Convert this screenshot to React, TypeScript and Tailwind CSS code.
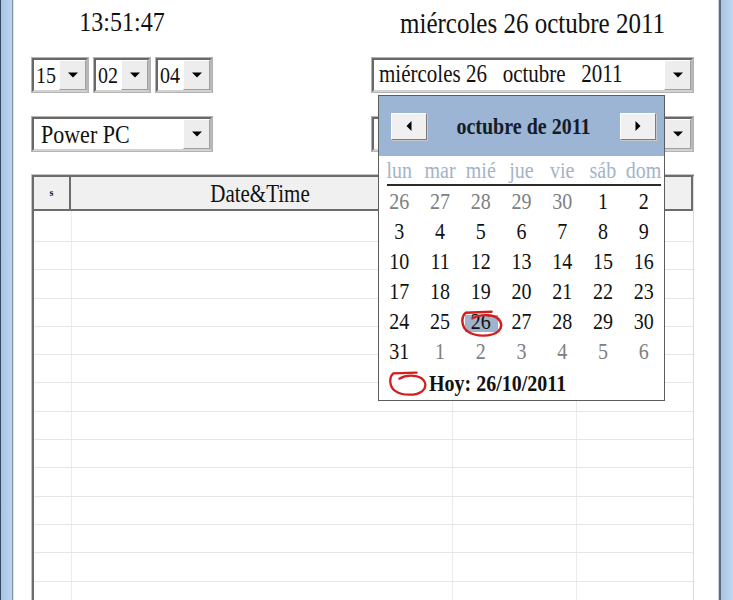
import React from "react";

function T({ children }: { children: React.ReactNode }) {
  return <span className="inline-block scale-y-[1.18] whitespace-pre">{children}</span>;
}

function ArrowDown() {
  return (
    <svg width="10" height="6" viewBox="0 0 10 6">
      <polygon points="0,0.5 10,0.5 5,5.5" fill="#000" />
    </svg>
  );
}

function DropBtn() {
  return (
    <div className="w-[27px] h-full flex items-center justify-center bg-[#ededed] border border-t-white border-l-white border-r-[#a0a0a0] border-b-[#a0a0a0]">
      <ArrowDown />
    </div>
  );
}

function Sel({ className, textClass, children }: { className: string; textClass: string; children?: React.ReactNode }) {
  return (
    <div className={`h-[36px] border border-[#b4b4b4] ${className}`}>
      <div className="h-full flex border-2 border-t-[#686868] border-l-[#686868] border-r-[#b8b8b8] border-b-[#d2d2d2] bg-white">
        <div className={`flex-1 min-w-0 flex items-center whitespace-pre overflow-hidden ${textClass}`}>{children}</div>
        <DropBtn />
      </div>
    </div>
  );
}

function NavBtn({ dir }: { dir: "l" | "r" }) {
  return (
    <div className="w-[36px] h-[27px] flex items-center justify-center bg-[#f0f0f0] border border-t-white border-l-white border-r-[#7c7c7c] border-b-[#7c7c7c] shadow-[1px_1px_0_#c8c8c8]">
      <svg width="6" height="10" viewBox="0 0 6 10">
        {dir === "l" ? <polygon points="5.5,0 5.5,10 0.5,5" fill="#000" /> : <polygon points="0.5,0 0.5,10 5.5,5" fill="#000" />}
      </svg>
    </div>
  );
}

function RedLoop({ w, h }: { w: number; h: number }) {
  return (
    <svg width={w} height={h} viewBox="0 0 44 30" preserveAspectRatio="none">
      <path
        d="M32 3 L5 4 C0 8 0 19 7 24 C15 30 32 30 39 24 C45 18 42 9 31 7 C24 6 17 7 12 10"
        fill="none"
        stroke="#d21e1e"
        strokeWidth="2.6"
        strokeLinecap="round"
      />
    </svg>
  );
}

const weeks: [number, boolean][][] = [
  [[26, false], [27, false], [28, false], [29, false], [30, false], [1, true], [2, true]],
  [[3, true], [4, true], [5, true], [6, true], [7, true], [8, true], [9, true]],
  [[10, true], [11, true], [12, true], [13, true], [14, true], [15, true], [16, true]],
  [[17, true], [18, true], [19, true], [20, true], [21, true], [22, true], [23, true]],
  [[24, true], [25, true], [26, true], [27, true], [28, true], [29, true], [30, true]],
  [[31, true], [1, false], [2, false], [3, false], [4, false], [5, false], [6, false]],
];

function Calendar() {
  return (
    <div className="absolute left-[7px] top-[38px] w-[287px] h-[306px] z-10 border border-[#5c5c5c] bg-white flex flex-col">
      <div className="h-[60px] bg-[#9cb5d5] flex items-center justify-between pl-[12px] pr-[8px]">
        <NavBtn dir="l" />
        <div className="text-[20px] font-bold text-[#141c28] leading-none"><T>octubre de 2011</T></div>
        <NavBtn dir="r" />
      </div>
      <div className="h-[28px] grid grid-cols-7 items-center text-[20px] text-[#a3b3c8] leading-none">
        {["lun", "mar", "mié", "jue", "vie", "sáb", "dom"].map((d) => (
          <div key={d} className="text-center whitespace-nowrap"><T>{d}</T></div>
        ))}
      </div>
      <div className="ml-[8px] mr-[3px] h-[2px] bg-[#2b2b2b]" />
      {weeks.map((wk, i) => (
        <div key={i} className="h-[30px] grid grid-cols-7 items-center text-[20px] leading-none">
          {wk.map(([d, cur], j) => {
            const sel = i === 4 && j === 2;
            return (
              <div key={j} className={`relative h-full flex items-center justify-center ${cur ? "text-[#111]" : "text-[#808080]"}`}>
                {sel && <div className="absolute left-[5px] top-[9px] w-[33px] h-[17px] bg-[#9fb3cc]" />}
                <span className="relative"><T>{d}</T></span>
                {sel && (
                  <div className="absolute left-[1px] top-[3px]">
                    <RedLoop w={42} h={28} />
                  </div>
                )}
              </div>
            );
          })}
        </div>
      ))}
      <div className="flex-1 flex items-center pl-[10px]">
        <RedLoop w={38} h={26} />
        <span className="ml-[2px] text-[20px] font-bold text-[#111] leading-none"><T>Hoy: 26/10/2011</T></span>
      </div>
    </div>
  );
}

export default function App() {
  const rows = Array.from({ length: 14 });
  return (
    <div className="w-[733px] h-[600px] flex overflow-hidden bg-white font-['Liberation_Serif',serif] text-[#111]">
      <div className="w-[14px] h-full flex">
        <div className="w-[1px] bg-[#33475e]" />
        <div className="w-[11px] bg-gradient-to-r from-[#a9c6e4] to-[#bcd5ee]" />
        <div className="w-[1px] bg-[#7e90a4]" />
        <div className="w-[1px] bg-[#e4e8ec]" />
      </div>

      <div className="flex-1 pl-[17px] pr-[24px] flex flex-col">
        <div className="grid grid-cols-[182px_1fr] gap-x-[158px]">
          <div className="h-[44px] flex items-center justify-center text-[24px] leading-none"><T>13:51:47</T></div>
          <div className="h-[44px] flex items-center justify-center text-[25px] leading-none"><T>miércoles 26 octubre 2011</T></div>

          <div className="mt-[13px] flex gap-[4px]">
            <Sel className="w-[58px]" textClass="pl-[2px] text-[20px]"><T>15</T></Sel>
            <Sel className="w-[58px]" textClass="pl-[2px] text-[20px]"><T>02</T></Sel>
            <Sel className="w-[58px]" textClass="pl-[2px] text-[20px]"><T>04</T></Sel>
          </div>
          <div className="mt-[13px] relative z-10">
            <Sel className="w-[323px]" textClass="pl-[5px] text-[21px]"><T>miércoles 26   octubre   2011</T></Sel>
            <Calendar />
          </div>

          <div className="mt-[23px]">
            <Sel className="w-full" textClass="pl-[7px] text-[22px]"><T>Power PC</T></Sel>
          </div>
          <div className="mt-[23px]">
            <Sel className="w-[323px]" textClass="pl-[5px] text-[21px]"> </Sel>
          </div>
        </div>

        <div className="mt-[22px] flex-1 border-t border-l border-[#c4c4c4]">
          <div className="h-full border-t-2 border-l-2 border-[#6c6c6c] border-r border-r-[#dcdcdc] flex flex-col">
            <div className="h-[34px] flex bg-[#f0f0f0] border-b-2 border-[#6c6c6c] shrink-0">
              <div className="w-[37px] border-r-2 border-[#6c6c6c] flex items-center justify-center">
                <span className="text-[10px] font-bold leading-none">s</span>
              </div>
              <div className="w-[380px] border-r-2 border-[#6c6c6c] flex items-center justify-center text-[21px] leading-none pt-[2px]"><T>Date&amp;Time</T></div>
              <div className="w-[123px] border-r-2 border-[#6c6c6c]" />
              <div className="flex-1 border-r-2 border-[#6c6c6c]" />
            </div>
            {rows.map((_, i) => (
              <div key={i} className={`${i === 0 ? "h-[31px]" : "h-[28.3px]"} shrink-0 flex border-b border-[#e6e6e6]`}>
                <div className="w-[38px] border-r border-[#ececec]" />
                <div className="w-[381px] border-r border-[#ebebeb]" />
                <div className="w-[124px] border-r border-[#ebebeb]" />
                <div className="flex-1" />
              </div>
            ))}
          </div>
        </div>
      </div>

      <div className="w-[15px] h-full flex">
        <div className="w-[1px] bg-[#c9d0d7]" />
        <div className="w-[2px] bg-[#5a6b7e]" />
        <div className="flex-1 bg-gradient-to-r from-[#a8c4e2] to-[#c2d8ef]" />
      </div>
    </div>
  );
}
